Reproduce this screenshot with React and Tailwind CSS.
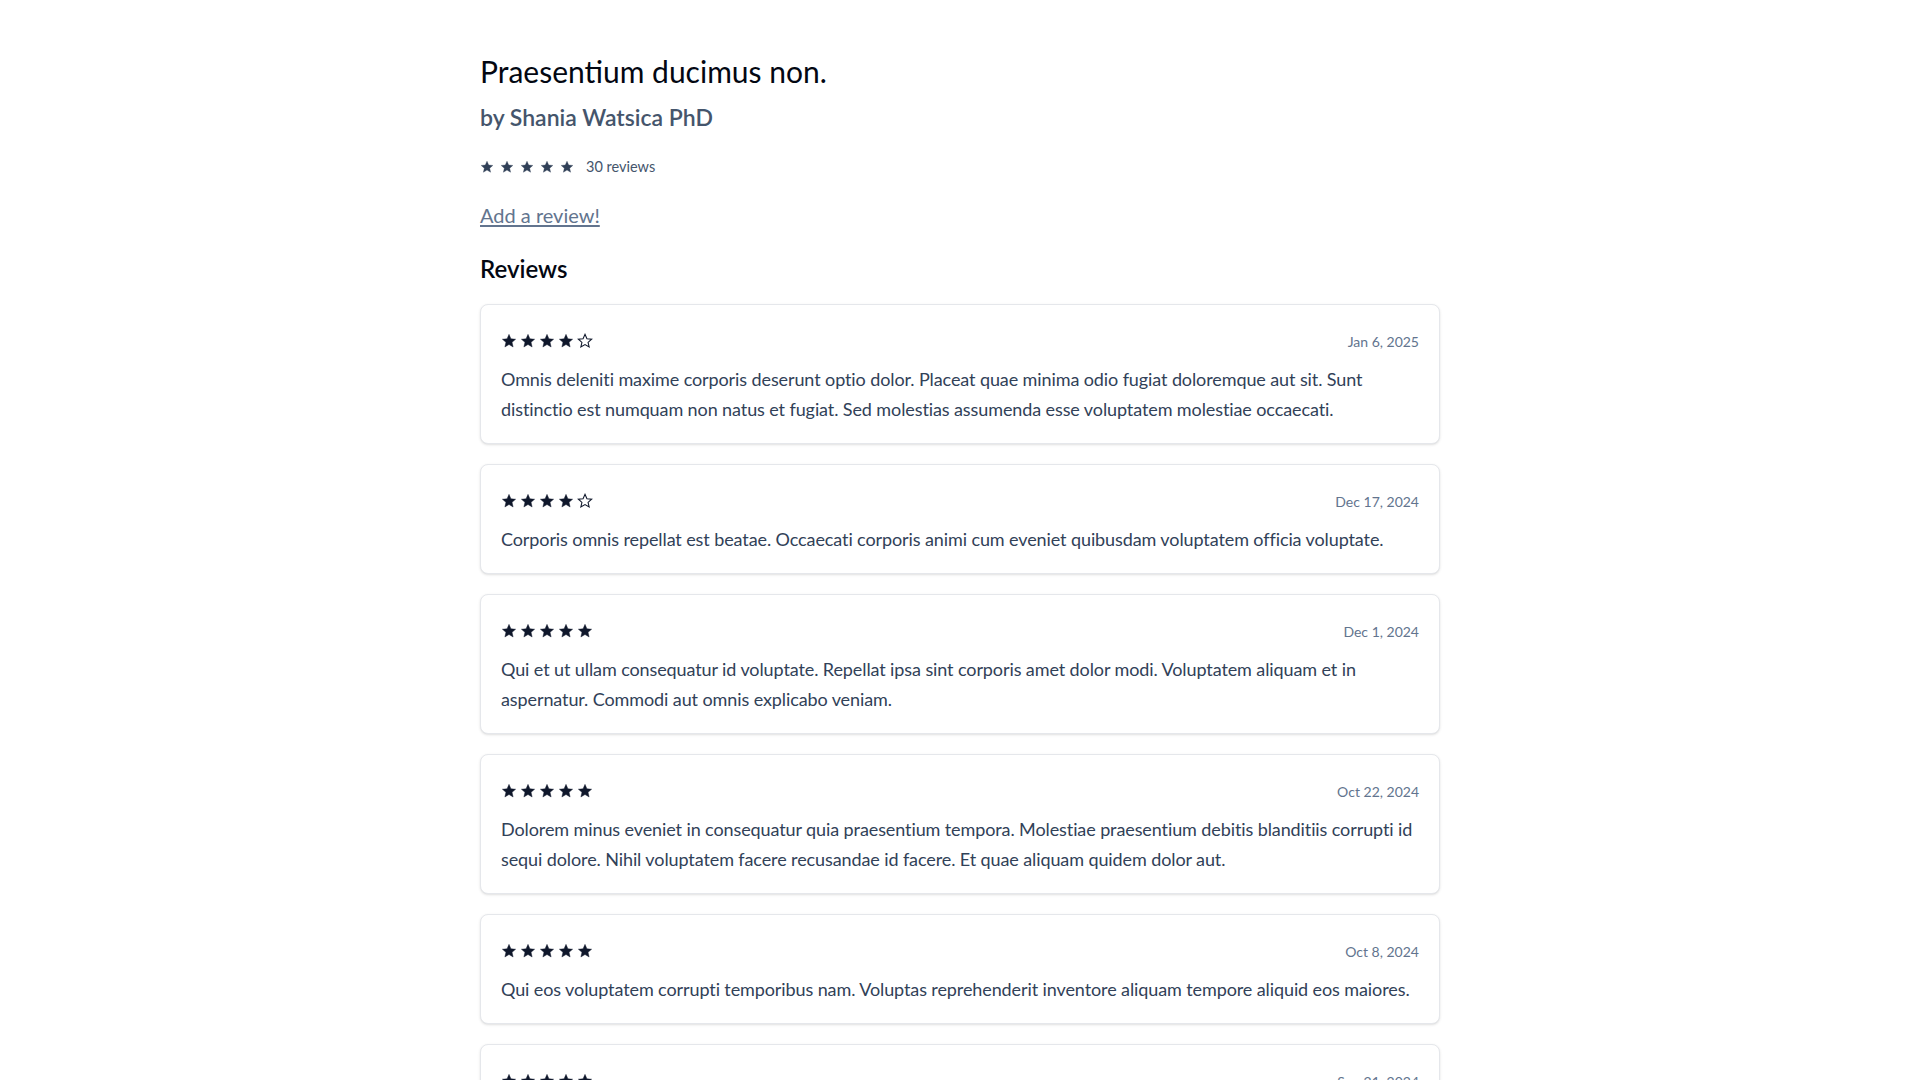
import React from "react";

const reviews = [
  { rating: 4, date: "Jan 6, 2025", text: "Omnis deleniti maxime corporis deserunt optio dolor. Placeat quae minima odio fugiat doloremque aut sit. Sunt distinctio est numquam non natus et fugiat. Sed molestias assumenda esse voluptatem molestiae occaecati." },
  { rating: 4, date: "Dec 17, 2024", text: "Corporis omnis repellat est beatae. Occaecati corporis animi cum eveniet quibusdam voluptatem officia voluptate." },
  { rating: 5, date: "Dec 1, 2024", text: "Qui et ut ullam consequatur id voluptate. Repellat ipsa sint corporis amet dolor modi. Voluptatem aliquam et in aspernatur. Commodi aut omnis explicabo veniam." },
  { rating: 5, date: "Oct 22, 2024", text: "Dolorem minus eveniet in consequatur quia praesentium tempora. Molestiae praesentium debitis blanditiis corrupti id sequi dolore. Nihil voluptatem facere recusandae id facere. Et quae aliquam quidem dolor aut." },
  { rating: 5, date: "Oct 8, 2024", text: "Qui eos voluptatem corrupti temporibus nam. Voluptas reprehenderit inventore aliquam tempore aliquid eos maiores." },
  { rating: 5, date: "Sep 21, 2024", text: "Aut rerum voluptatem quia et sunt. Dolores ut eos quod rerum nesciunt aut. Ipsa sed qui vel repellendus dolorem." },
];

const STAR = "12,2 14.9,8.6 22,9.3 16.6,14 18.2,21 12,17.3 5.8,21 7.4,14 2,9.3 9.1,8.6";

function Star({ filled, size }) {
  return (
    <svg width={size} height={size} viewBox="0 0 24 24">
      <polygon
        points={STAR}
        fill={filled ? "currentColor" : "none"}
        stroke="currentColor"
        strokeWidth={filled ? 0.6 : 1.6}
        strokeLinejoin="miter"
      />
    </svg>
  );
}

export default function App() {
  return (
    <div className="min-h-screen bg-white" style={{ fontFamily: "Lato, 'Open Sans', sans-serif" }}>
      <div className="mx-auto max-w-5xl px-8 pt-[53px] pb-10">
        <h1 className="text-[30px] leading-9 text-gray-950">Praesentium ducimus non.</h1>
        <h2 className="mt-3 text-[23px] leading-8 font-semibold text-slate-600">by Shania Watsica PhD</h2>
        <div className="mt-6 flex h-5 items-center">
          <div className="flex items-center gap-[6px] text-slate-700">
            {[0, 1, 2, 3, 4].map((i) => (
              <Star key={i} filled size={14} />
            ))}
          </div>
          <span className="ml-3 text-[14.5px] text-slate-600">30 reviews</span>
        </div>
        <div className="mt-6 h-7">
          <a href="#" className="text-xl leading-7 text-slate-500 underline underline-offset-2">Add a review!</a>
        </div>
        <h3 className="mt-6 text-2xl leading-8 font-semibold text-gray-950">Reviews</h3>
        <div className="mt-[19px] flex flex-col gap-5">
          {reviews.map((r, idx) => (
            <div key={idx} className="rounded-lg border border-gray-200 bg-white px-5 pt-[21px] pb-[19px] shadow-sm">
              <div className="flex h-[30px] items-center justify-between">
                <div className="flex items-center gap-[3px] text-slate-900">
                  {[0, 1, 2, 3, 4].map((i) => (
                    <Star key={i} filled={i < r.rating} size={16} />
                  ))}
                </div>
                <span className="text-[14px] text-slate-500">{r.date}</span>
              </div>
              <p className="mt-2 text-lg leading-[30px] tracking-[-0.1px] text-slate-700">{r.text}</p>
            </div>
          ))}
        </div>
      </div>
    </div>
  );
}
